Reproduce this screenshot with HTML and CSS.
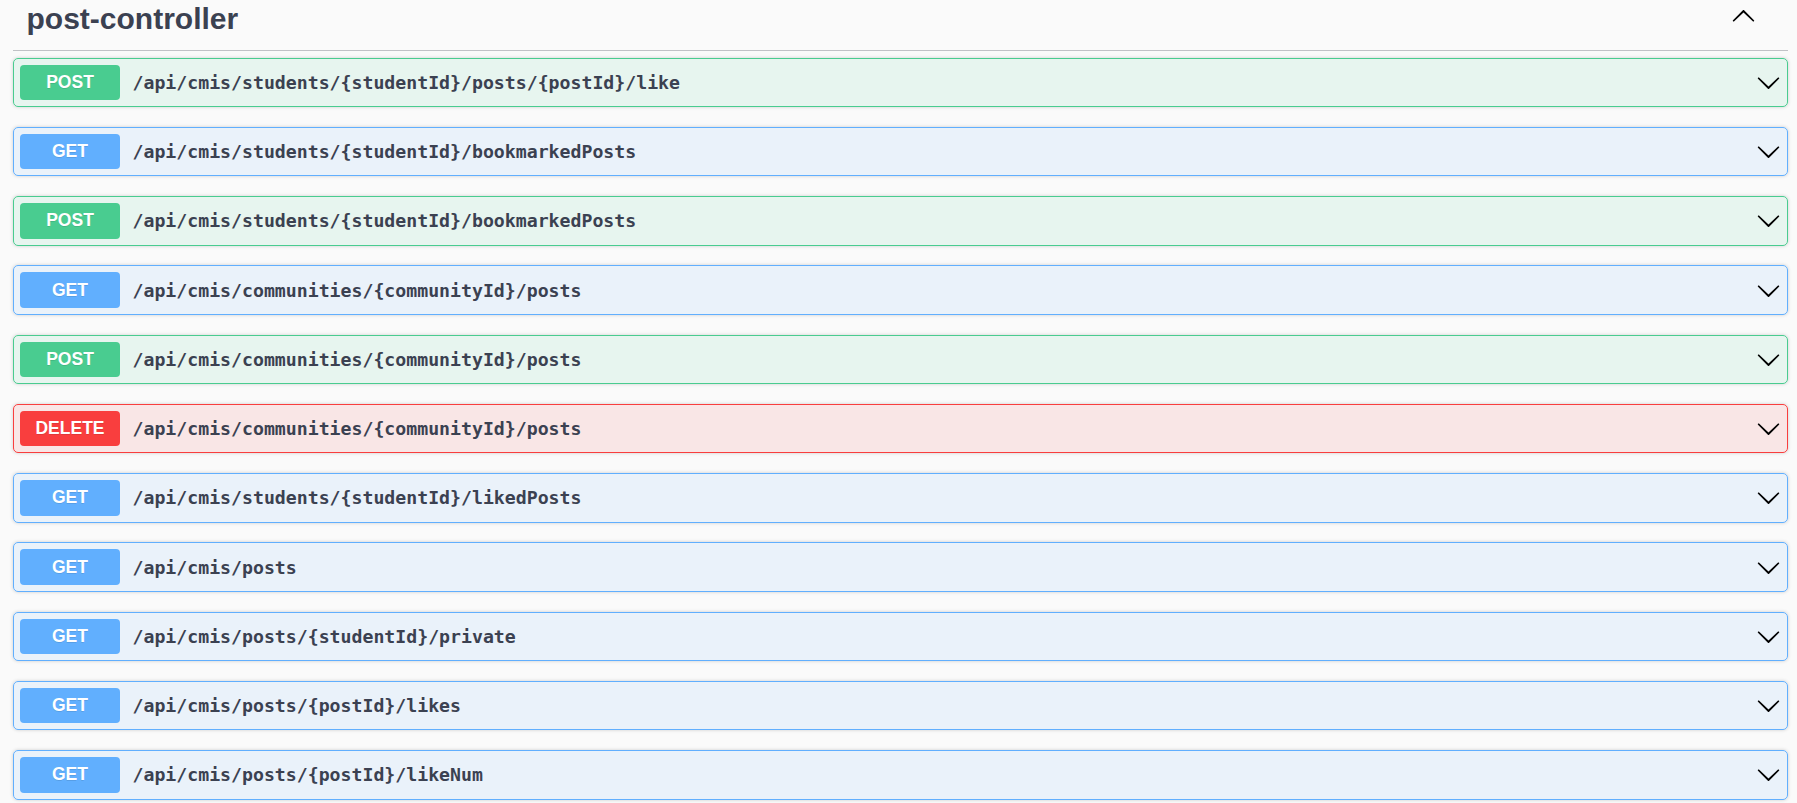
FILE: index.html
```html
<!DOCTYPE html>
<html lang="en">
<head>
<meta charset="utf-8">
<title>post-controller</title>
<link rel="stylesheet" href="styles.css">
</head>
<body>
<div class="tag-section">
  <h3 class="tag-header">
    <span class="tag-name">post-controller</span>
    <button class="tag-toggle" aria-label="Collapse">
      <svg class="caret-up" viewBox="0 0 20 20" width="25" height="25"><path d="M17.418 6.109c.272-.268.709-.268.979 0s.271.701 0 .969l-7.908 7.83c-.27.268-.707.268-.979 0l-7.908-7.83c-.27-.268-.27-.701 0-.969.271-.268.709-.268.979 0L10 13.25l7.418-7.141z"/></svg>
    </button>
  </h3>
  <div class="ops">
    <div class="op op-post"><span class="method">POST</span><span class="path">/api/cmis/students/{studentId}/posts/{postId}/like</span><svg class="chev" viewBox="0 0 20 20" width="25" height="25"><path d="M17.418 6.109c.272-.268.709-.268.979 0s.271.701 0 .969l-7.908 7.83c-.27.268-.707.268-.979 0l-7.908-7.83c-.27-.268-.27-.701 0-.969.271-.268.709-.268.979 0L10 13.25l7.418-7.141z"/></svg></div>
    <div class="op op-get"><span class="method">GET</span><span class="path">/api/cmis/students/{studentId}/bookmarkedPosts</span><svg class="chev" viewBox="0 0 20 20" width="25" height="25"><path d="M17.418 6.109c.272-.268.709-.268.979 0s.271.701 0 .969l-7.908 7.83c-.27.268-.707.268-.979 0l-7.908-7.83c-.27-.268-.27-.701 0-.969.271-.268.709-.268.979 0L10 13.25l7.418-7.141z"/></svg></div>
    <div class="op op-post"><span class="method">POST</span><span class="path">/api/cmis/students/{studentId}/bookmarkedPosts</span><svg class="chev" viewBox="0 0 20 20" width="25" height="25"><path d="M17.418 6.109c.272-.268.709-.268.979 0s.271.701 0 .969l-7.908 7.83c-.27.268-.707.268-.979 0l-7.908-7.83c-.27-.268-.27-.701 0-.969.271-.268.709-.268.979 0L10 13.25l7.418-7.141z"/></svg></div>
    <div class="op op-get"><span class="method">GET</span><span class="path">/api/cmis/communities/{communityId}/posts</span><svg class="chev" viewBox="0 0 20 20" width="25" height="25"><path d="M17.418 6.109c.272-.268.709-.268.979 0s.271.701 0 .969l-7.908 7.83c-.27.268-.707.268-.979 0l-7.908-7.83c-.27-.268-.27-.701 0-.969.271-.268.709-.268.979 0L10 13.25l7.418-7.141z"/></svg></div>
    <div class="op op-post"><span class="method">POST</span><span class="path">/api/cmis/communities/{communityId}/posts</span><svg class="chev" viewBox="0 0 20 20" width="25" height="25"><path d="M17.418 6.109c.272-.268.709-.268.979 0s.271.701 0 .969l-7.908 7.83c-.27.268-.707.268-.979 0l-7.908-7.83c-.27-.268-.27-.701 0-.969.271-.268.709-.268.979 0L10 13.25l7.418-7.141z"/></svg></div>
    <div class="op op-delete"><span class="method">DELETE</span><span class="path">/api/cmis/communities/{communityId}/posts</span><svg class="chev" viewBox="0 0 20 20" width="25" height="25"><path d="M17.418 6.109c.272-.268.709-.268.979 0s.271.701 0 .969l-7.908 7.83c-.27.268-.707.268-.979 0l-7.908-7.830c-.27-.268-.27-.701 0-.969.271-.268.709-.268.979 0L10 13.25l7.418-7.141z"/></svg></div>
    <div class="op op-get"><span class="method">GET</span><span class="path">/api/cmis/students/{studentId}/likedPosts</span><svg class="chev" viewBox="0 0 20 20" width="25" height="25"><path d="M17.418 6.109c.272-.268.709-.268.979 0s.271.701 0 .969l-7.908 7.83c-.27.268-.707.268-.979 0l-7.908-7.83c-.27-.268-.27-.701 0-.969.271-.268.709-.268.979 0L10 13.25l7.418-7.141z"/></svg></div>
    <div class="op op-get"><span class="method">GET</span><span class="path">/api/cmis/posts</span><svg class="chev" viewBox="0 0 20 20" width="25" height="25"><path d="M17.418 6.109c.272-.268.709-.268.979 0s.271.701 0 .969l-7.908 7.83c-.27.268-.707.268-.979 0l-7.908-7.83c-.27-.268-.27-.701 0-.969.271-.268.709-.268.979 0L10 13.25l7.418-7.141z"/></svg></div>
    <div class="op op-get"><span class="method">GET</span><span class="path">/api/cmis/posts/{studentId}/private</span><svg class="chev" viewBox="0 0 20 20" width="25" height="25"><path d="M17.418 6.109c.272-.268.709-.268.979 0s.271.701 0 .969l-7.908 7.83c-.27.268-.707.268-.979 0l-7.908-7.83c-.27-.268-.27-.701 0-.969.271-.268.709-.268.979 0L10 13.25l7.418-7.141z"/></svg></div>
    <div class="op op-get"><span class="method">GET</span><span class="path">/api/cmis/posts/{postId}/likes</span><svg class="chev" viewBox="0 0 20 20" width="25" height="25"><path d="M17.418 6.109c.272-.268.709-.268.979 0s.271.701 0 .969l-7.908 7.83c-.27.268-.707.268-.979 0l-7.908-7.83c-.27-.268-.27-.701 0-.969.271-.268.709-.268.979 0L10 13.25l7.418-7.141z"/></svg></div>
    <div class="op op-get"><span class="method">GET</span><span class="path">/api/cmis/posts/{postId}/likeNum</span><svg class="chev" viewBox="0 0 20 20" width="25" height="25"><path d="M17.418 6.109c.272-.268.709-.268.979 0s.271.701 0 .969l-7.908 7.83c-.27.268-.707.268-.979 0l-7.908-7.83c-.27-.268-.27-.701 0-.969.271-.268.709-.268.979 0L10 13.25l7.418-7.141z"/></svg></div>
  </div>
</div>
</body>
</html>
```

FILE: styles.css
```css
html, body {
  margin: 0;
  padding: 0;
  background: #fafafa;
  overflow: hidden;
}

.tag-section {
  margin-left: 13px;
  width: 1775px;
  font-family: "Liberation Sans", Arial, sans-serif;
  color: #3b4151;
}

.tag-header {
  display: flex;
  align-items: flex-start;
  margin: 0 0 7px 0;
  padding: 2px 0 13px 13.5px;
  border-bottom: 1px solid rgba(59, 65, 81, 0.3);
  font-size: 30px;
  font-weight: bold;
  line-height: 34.5px;
}

.tag-name {
  flex: 1;
}

.tag-toggle {
  border: none;
  background: none;
  padding: 0;
  margin: 2px 31.75px 0 0;
  width: 25px;
  height: 25px;
  display: block;
}

.caret-up {
  display: block;
  transform: rotate(180deg);
  fill: #000;
}

.ops {
  display: flex;
  flex-direction: column;
}

.op {
  display: flex;
  align-items: center;
  border: 1px solid;
  border-radius: 5px;
  padding: 6px;
  margin-bottom: 19.77px;
  box-shadow: 0 0 3.75px rgba(0, 0, 0, 0.19);
}

.method {
  display: flex;
  align-items: center;
  justify-content: center;
  width: 100px;
  height: 35.5px;
  border-radius: 4px;
  color: #fff;
  font-family: "Liberation Sans", Arial, sans-serif;
  font-weight: bold;
  font-size: 17.5px;
  text-shadow: 0 1px 0 rgba(0, 0, 0, 0.1);
  flex-shrink: 0;
}

.path {
  flex: 1;
  padding: 0 12.5px;
  font-family: "DejaVu Sans Mono", "Liberation Mono", monospace;
  font-weight: 600;
  font-size: 18.2px;
  color: #3b4151;
}

.chev {
  display: block;
  fill: #000;
  flex-shrink: 0;
}

.op-post {
  border-color: #49cc90;
  background: rgba(73, 204, 144, 0.1);
}
.op-post .method { background: #49cc90; }

.op-get {
  border-color: #61affe;
  background: rgba(97, 175, 254, 0.1);
}
.op-get .method { background: #61affe; }

.op-delete {
  border-color: #f93e3e;
  background: rgba(249, 62, 62, 0.1);
}
.op-delete .method { background: #f93e3e; }
```
